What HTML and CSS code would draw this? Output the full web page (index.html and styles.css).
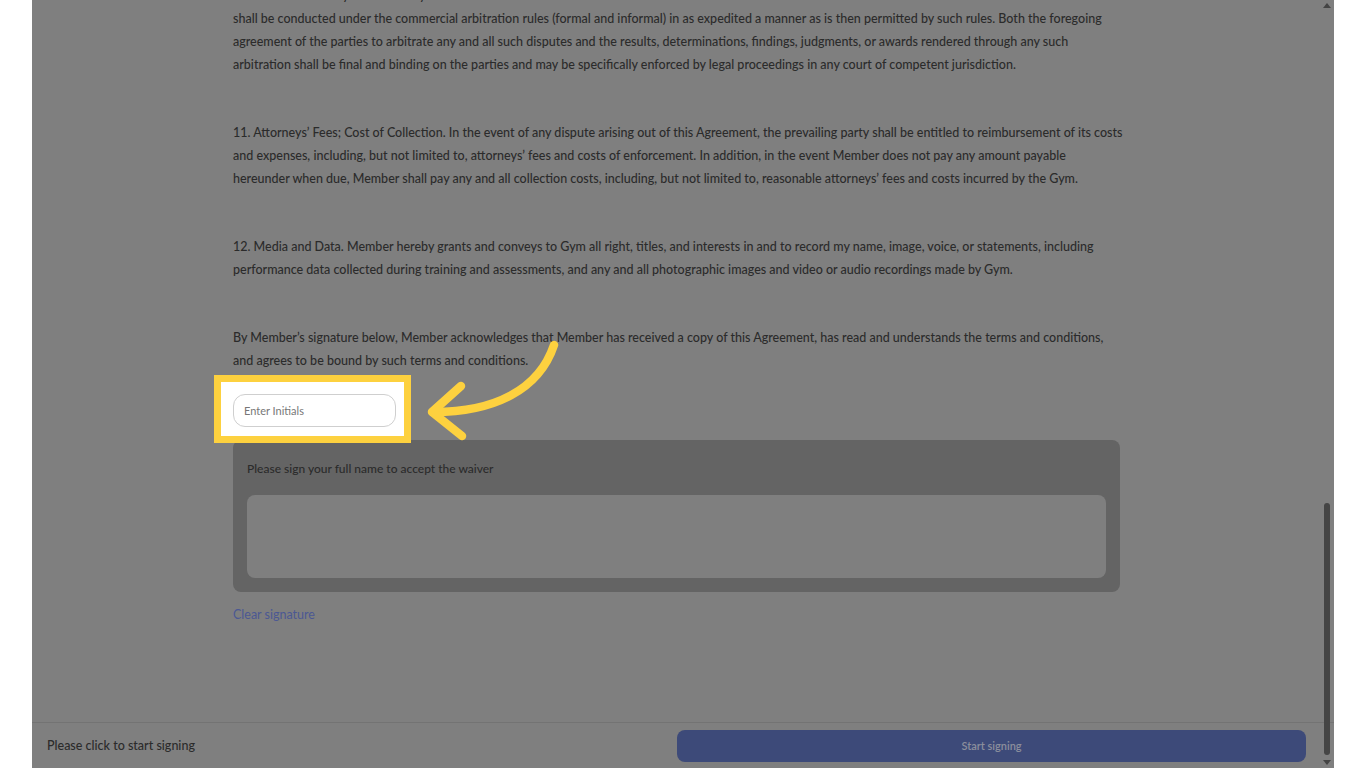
FILE: index.html
```html
<!DOCTYPE html>
<html lang="en">
<head>
  <meta charset="UTF-8">
  <meta name="viewport" content="width=device-width, initial-scale=1.0">
  <link rel="stylesheet" href="styles.css">
  <title>Membership Waiver</title>
</head>
<body>
  <div class="frame">
    <div class="scroller">
      <div class="doc">
        <p>10. Arbitration. Any dispute arising out of or relating to this Agreement, or the breach thereof, shall be submitted to binding arbitration, and such arbitration shall be held in the county where the Gym is located and</p>
        <p class="tail">shall be conducted under the commercial arbitration rules (formal and informal) in as expedited a manner as is then permitted by such rules. Both the foregoing agreement of the parties to arbitrate any and all such disputes and the results, determinations, findings, judgments, or awards rendered through any such arbitration shall be final and binding on the parties and may be specifically enforced by legal proceedings in any court of competent jurisdiction.</p>

        <p>11. Attorneys’ Fees; Cost of Collection. In the event of any dispute arising out of this Agreement, the prevailing party shall be entitled to reimbursement of its costs and expenses, including, but not limited to, attorneys’ fees and costs of enforcement. In addition, in the event Member does not pay any amount payable hereunder when due, Member shall pay any and all collection costs, including, but not limited to, reasonable attorneys’ fees and costs incurred by the Gym.</p>

        <p>12. Media and Data. Member hereby grants and conveys to Gym all right, titles, and interests in and to record my name, image, voice, or statements, including performance data collected during training and assessments, and any and all photographic images and video or audio recordings made by Gym.</p>

        <p class="last">By Member’s signature below, Member acknowledges that Member has received a copy of this Agreement, has read and understands the terms and conditions, and agrees to be bound by such terms and conditions.</p>

        <div class="initials">
          <div class="highlight"></div>
          <input class="initials-input" type="text" placeholder="Enter Initials">
        </div>

        <div class="sigbox">
          <div class="sig-label">Please sign your full name to accept the waiver</div>
          <div class="sig-pad"></div>
        </div>
        <a class="clear" href="#">Clear signature</a>
      </div>
    </div>

    <div class="footer">
      <span class="footer-text">Please click to start signing</span>
      <button class="start">Start signing</button>
    </div>

    <!-- tutorial arrow pointing at the initials field -->
    <svg class="arrow" width="160" height="120" viewBox="0 0 160 120">
      <path d="M140 15 C 125 60, 80 82, 20 82" fill="none" stroke="#fdd13f" stroke-width="8.5" stroke-linecap="round"/>
      <path d="M47 56 L18 82 L48 106" fill="none" stroke="#fdd13f" stroke-width="8.5" stroke-linecap="round" stroke-linejoin="round"/>
    </svg>

    <div class="scrollbar">
      <div class="sb-up"></div>
      <div class="sb-thumb"></div>
      <div class="sb-down"></div>
    </div>
  </div>
</body>
</html>
```

FILE: styles.css
```css
body{
  margin: 0;
  background-color: #fff;
  font-family: "Lato", "Noto Sans", sans-serif;
  overflow: hidden;
}
.frame{
  position: relative;
  margin: 0 32px;
  height: 768px;
  background-color: #7f7f7f;
  display: flex;
  flex-direction: column;
  overflow: hidden;
}
.scroller{
  flex: 1;
  overflow: hidden;
}
.doc{
  width: 887px;
  margin-left: 201px;
  margin-top: -39px;
}
.doc p{
  margin: 0 -3px 45px 0;
  font-size: 12.5px;
  line-height: 23px;
  color: #2b2b2b;
  font-weight: 500;
}
.doc p.tail{
  margin-top: -45px;
}
.doc p.last{
  margin-bottom: 22px;
}
.initials{
  position: relative;
  width: 163px;
  height: 33px;
}
.highlight{
  position: absolute;
  top: -19px;
  left: -19px;
  right: -15px;
  bottom: -16px;
  background-color: #fff;
  border: 7px solid #fdd13f;
}
.initials-input{
  position: relative;
  box-sizing: border-box;
  width: 163px;
  height: 33px;
  border: 1px solid #cfcfcf;
  border-radius: 12px;
  padding: 0 10px;
  font-family: "Lato", sans-serif;
  font-size: 11px;
  outline: none;
  background: #fff;
}
.initials-input::placeholder{
  color: #777;
}
.sigbox{
  margin-top: 13px;
  background-color: #646464;
  border-radius: 8px;
  padding: 20px 14px 14px 14px;
}
.sig-label{
  font-size: 12px;
  color: #2b2b2b;
  font-weight: 500;
  line-height: 18px;
  margin-bottom: 17px;
}
.sig-pad{
  height: 83px;
  background-color: #7f7f7f;
  border-radius: 8px;
}
.clear{
  display: inline-block;
  margin-top: 15px;
  font-size: 12.5px;
  color: #4b5893;
  text-decoration: none;
}
.footer{
  height: 45px;
  border-top: 1px solid #737373;
  display: flex;
  align-items: center;
  padding-left: 15px;
  padding-right: 28px;
}
.footer-text{
  flex: 1;
  font-size: 12.5px;
  color: #2b2b2b;
  font-weight: 500;
}
.start{
  width: 629px;
  height: 32px;
  border: none;
  border-radius: 8px;
  background-color: #3d4a79;
  color: #8b8e9c;
  font-family: "Lato", sans-serif;
  font-size: 11px;
  font-weight: 600;
}
.arrow{
  position: absolute;
  left: 382px;
  top: 330px;
}
.scrollbar{
  position: absolute;
  right: 0;
  top: 0;
  width: 14px;
  height: 768px;
}
.sb-up, .sb-down{
  position: absolute;
  left: 3px;
  width: 0;
  height: 0;
  border-left: 4px solid transparent;
  border-right: 4px solid transparent;
}
.sb-up{
  top: 3px;
  border-bottom: 5px solid #444;
}
.sb-down{
  bottom: 3px;
  border-top: 5px solid #444;
}
.sb-thumb{
  position: absolute;
  left: 4px;
  top: 503px;
  width: 6px;
  height: 252px;
  border-radius: 3px;
  background-color: #454545;
}
```
